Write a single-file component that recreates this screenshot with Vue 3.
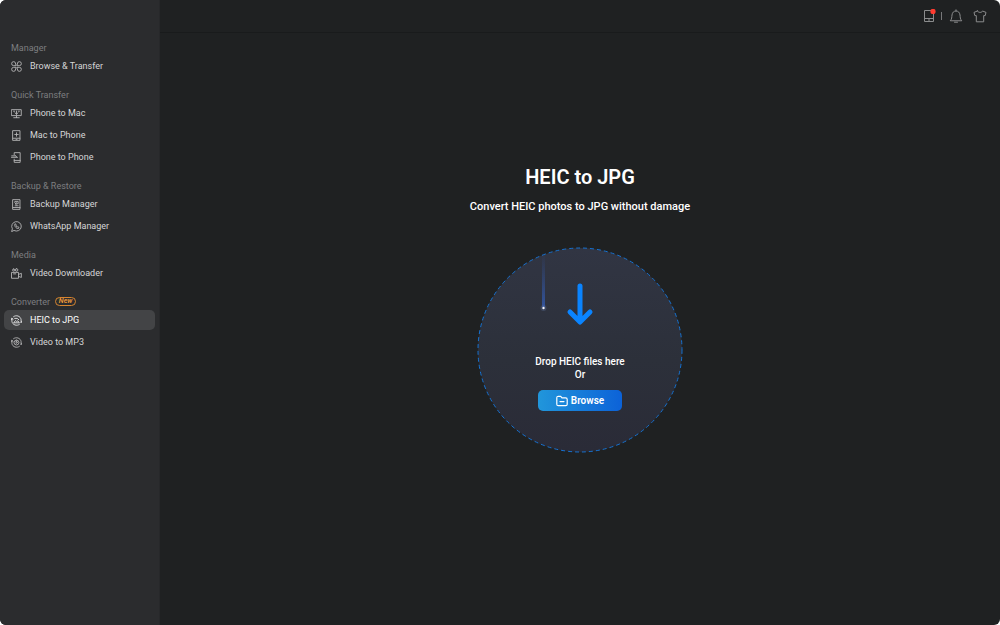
<script setup>
const groups = [
  { title: 'Manager', items: [{ label: 'Browse & Transfer', icon: 'clover' }] },
  {
    title: 'Quick Transfer',
    items: [
      { label: 'Phone to Mac', icon: 'monitor' },
      { label: 'Mac to Phone', icon: 'phonePlus' },
      { label: 'Phone to Phone', icon: 'phoneIn' },
    ],
  },
  {
    title: 'Backup & Restore',
    items: [
      { label: 'Backup Manager', icon: 'backup' },
      { label: 'WhatsApp Manager', icon: 'chat' },
    ],
  },
  { title: 'Media', items: [{ label: 'Video Downloader', icon: 'camera' }] },
  {
    title: 'Converter',
    isNew: true,
    items: [
      { label: 'HEIC to JPG', icon: 'image', active: true },
      { label: 'Video to MP3', icon: 'play' },
    ],
  },
]

const icons = {
  clover:
    'M5.1 5.1H2.9A2.2 2.2 0 1 1 5.1 2.9ZM6.9 5.1H9.1A2.2 2.2 0 1 0 6.9 2.9ZM5.1 6.9H2.9A2.2 2.2 0 1 0 5.1 9.1ZM6.9 6.9H9.1A2.2 2.2 0 1 1 6.9 9.1Z',
  monitor: 'M.8 1.8H11.2V8.3H.8ZM3 10.6H9M6 8.5V10.5M6 3.3V6.8M4.3 5.2L6 6.8L7.7 5.2M2.8 3.5H4M8 3.5H9.2',
  phonePlus: 'M2.2 .7H9.8V11.3H2.2ZM2.2 9H9.8M6 3V6.8M4.1 4.9H7.9M5.5 10.2H6.6',
  phoneIn: 'M3.5 3V.7H10V11.3H3.5V7.8M3.5 9.2H10M.5 5.8H6.8M5 4.2L6.8 5.8M.8 4.2H5',
  backup: 'M2.2 .7H9.8V11.3H2.2ZM2.2 9.3H9.8M4.2 4V2.6H7.8V5.2H4.8M6 4L4.6 5.2L6 6.5M4.5 7.4H7.8',
  chat: 'M.8 11.2L1.5 8.5A5.2 5.2 0 1 1 3.6 10.5ZM4.1 3.5C3.2 5.7 6 8.8 8.3 8.1L8.7 6.9L7.3 6.2L6.6 6.8L5.3 5.5L5.8 4.7L5.1 3.4Z',
  camera:
    'M1 4.8H8.2V11.2H1ZM8.2 7L11.3 5.8V10.3L8.2 9.1M2.9 1A1.2 1.2 0 1 0 2.9 3.4A1.2 1.2 0 1 0 2.9 1M6.1 .7A1.4 1.4 0 1 0 6.1 3.5A1.4 1.4 0 1 0 6.1 .7M2.8 6.4H5.2',
  image:
    'M2.8 1.8A5.1 5.1 0 0 1 11 5V8.2M9.2 10.2A5.1 5.1 0 0 1 1 7V3.8M1 3.8L.2 5.2M1 3.8L2.3 4.8M11 8.2L11.8 6.8M3.2 8.2L5 6L6.3 7.3L7.4 6.3L8.8 8.2ZM4 3.7H6.8L8.5 5.2',
  play:
    'M2.8 1.8A5.1 5.1 0 0 1 11 5V8.2M9.2 10.2A5.1 5.1 0 0 1 1 7V3.8M1 3.8L.2 5.2M1 3.8L2.3 4.8M11 8.2L11.8 6.8M6 3.3A2.7 2.7 0 1 0 6 8.7A2.7 2.7 0 1 0 6 3.3M5.5 5V7L7 6Z',
}
</script>

<template>
  <div class="window">
    <nav class="sidebar" aria-label="Tools">
      <section v-for="group in groups" :key="group.title" class="group">
        <h2 class="group-title">
          {{ group.title }}
          <span v-if="group.isNew" class="new-badge">New</span>
        </h2>
        <button
          v-for="item in group.items"
          :key="item.label"
          type="button"
          class="nav-item"
          :class="{ active: item.active }"
        >
          <svg class="nav-icon" viewBox="0 0 12 12" aria-hidden="true">
            <path :d="icons[item.icon]" />
          </svg>
          {{ item.label }}
        </button>
      </section>
    </nav>

    <div class="content">
      <header class="toolbar">
        <button type="button" class="tool" aria-label="Device">
          <svg viewBox="0 0 14 14" aria-hidden="true">
            <path d="M8.5 1.5H2.5V12.5H11.5V5M2.5 9.500H11.5M7 9.500V12.500" />
            <circle class="dot" cx="11" cy="2.400" r="2.600" />
          </svg>
        </button>
        <span class="divider"></span>
        <button type="button" class="tool bell" aria-label="Notifications">
          <svg viewBox="0 0 14 14" aria-hidden="true">
            <path d="M1.500 11.500C3 10 2.700 8.200 3 6C3.300 3.500 4.800 2 7 2S10.700 3.500 11 6C11.300 8.200 11 10 12.500 11.500ZM7 .8V2M5.500 13.200H8.500" />
          </svg>
        </button>
        <button type="button" class="tool" aria-label="Themes">
          <svg viewBox="0 0 14 14" aria-hidden="true">
            <path d="M4.500 2L1 3.400L1.800 6.600H3.300V12.800H10.700V6.600H12.200L13 3.400L9.500 2C9 3.900 5 3.900 4.500 2Z" />
          </svg>
        </button>
      </header>

      <main class="main">
        <h1 class="title">HEIC to JPG</h1>
        <p class="subtitle">Convert HEIC photos to JPG without damage</p>
        <div class="drop-zone">
          <svg class="drop-art" viewBox="0 0 206 206" aria-hidden="true">
            <defs>
              <linearGradient id="fill" x1="0" y1="0" x2="0" y2="1">
                <stop offset="0" stop-color="#313543" />
                <stop offset=".55" stop-color="#2c303a" />
                <stop offset="1" stop-color="#2a2b37" />
              </linearGradient>
              <linearGradient id="trail" x1="0" y1="0" x2="0" y2="1">
                <stop offset="0" stop-color="#3159b0" stop-opacity="0" />
                <stop offset="1" stop-color="#3566cf" />
              </linearGradient>
            </defs>
            <circle class="ring" cx="103" cy="103" r="102" />
            <g class="spark">
              <rect x="65" y="5" width="3" height="55" fill="url(#trail)" opacity=".65" />
              <circle cx="66.500" cy="61" r="3" fill="#5b6f9c" opacity=".35" />
              <circle cx="66.500" cy="61" r="1.200" fill="#f2f5ff" />
            </g>
            <path class="arrow" d="M103 39V74M93 65L103 75L113 65" />
          </svg>
          <p class="drop-text">Drop HEIC files here<br />Or</p>
          <button type="button" class="browse">
            <svg viewBox="0 0 12 12" aria-hidden="true">
              <path d="M2.300 1.300H4.700L6 2.900H9.700Q11.200 2.900 11.200 4.400V9.200Q11.200 10.700 9.700 10.700H2.300Q.8 10.700 .8 9.200V2.800Q.8 1.300 2.300 1.300ZM4 6.600H8" />
            </svg>
            Browse
          </button>
        </div>
      </main>
    </div>
  </div>
</template>

<style>
body {
  background: #ffffff;
}
</style>

<style scoped>
.window {
  display: flex;
  min-height: 100vh;
  border-radius: 6px;
  overflow: hidden;
  background: #1f2122;
  color: #ffffff;
  font-family: Roboto, "Liberation Sans", sans-serif;
  font-size: 10px;
}

h1,
h2,
p {
  margin: 0;
}

button {
  border: 0;
  padding: 0;
  background: none;
  color: inherit;
  font: inherit;
}

svg {
  display: block;
  fill: none;
  stroke: currentColor;
  stroke-linecap: round;
  stroke-linejoin: round;
}

.sidebar {
  box-sizing: border-box;
  flex: 0 0 160px;
  display: flex;
  flex-direction: column;
  gap: 10px;
  padding: 40px 4px 0 4px;
  background: #2b2c2e;
  border-right: 1px solid #27282a;
  font-size: 9px;
}

.group {
  display: flex;
  flex-direction: column;
}

.group-title {
  display: flex;
  align-items: center;
  gap: 5px;
  height: 15px;
  padding-left: 7px;
  color: #7d7e80;
  font-size: 9px;
  font-weight: 400;
}

.new-badge {
  box-sizing: border-box;
  width: 21px;
  height: 9px;
  border: 1px solid #d58530;
  border-radius: 5px;
  color: #f09a38;
  font-size: 7px;
  font-style: italic;
  font-weight: 600;
  line-height: 7px;
  text-align: center;
}

.nav-item {
  display: flex;
  align-items: center;
  gap: 8px;
  height: 20px;
  margin: 1px 0;
  padding: 0 7px;
  border-radius: 5px;
  color: #d6d6d7;
  text-align: left;
  white-space: nowrap;
}

.nav-item.active {
  background: #434446;
  color: #ffffff;
}

.nav-icon {
  width: 11px;
  height: 11px;
  color: #b4b4b5;
}

.nav-item.active .nav-icon {
  color: #e4e4e5;
}

.content {
  flex: 1;
  display: flex;
  flex-direction: column;
}

.toolbar {
  display: flex;
  align-items: center;
  justify-content: flex-end;
  height: 32px;
  padding-right: 13px;
  border-bottom: 1px solid #191b1c;
  color: #8b8c8d;
}

.tool svg {
  width: 14px;
  height: 14px;
}

.dot {
  fill: #ff3b30;
  stroke: none;
}

.divider {
  width: 1px;
  height: 8px;
  margin: 0 7px 0 5px;
  background: #77787a;
}

.bell {
  margin-right: 10px;
}

.main {
  flex: 1;
  display: flex;
  flex-direction: column;
  align-items: center;
  padding-top: 132px;
}

.title {
  font-size: 20px;
  font-weight: 600;
  line-height: 24px;
}

.subtitle {
  margin-top: 10px;
  font-size: 11px;
  font-weight: 500;
  line-height: 16px;
}

.drop-zone {
  position: relative;
  box-sizing: border-box;
  display: flex;
  flex-direction: column;
  align-items: center;
  width: 206px;
  height: 206px;
  margin-top: 32px;
  padding-top: 108px;
}

.drop-art {
  position: absolute;
  inset: 0;
}

.ring {
  fill: url(#fill);
  stroke: #1672d2;
  stroke-dasharray: 4 3;
  stroke-linecap: butt;
}

.spark {
  stroke: none;
}

.arrow {
  stroke: #0a84ff;
  stroke-width: 5;
}

.drop-text {
  position: relative;
  font-weight: 500;
  line-height: 13px;
  text-align: center;
}

.browse {
  position: relative;
  display: flex;
  align-items: center;
  justify-content: center;
  gap: 3px;
  width: 84px;
  height: 21px;
  margin-top: 9px;
  border-radius: 5px;
  background: linear-gradient(90deg, #2196db, #0c62d8);
  font-weight: 600;
}

.browse svg {
  width: 12px;
  height: 12px;
  stroke-width: 1.2;
}
</style>
